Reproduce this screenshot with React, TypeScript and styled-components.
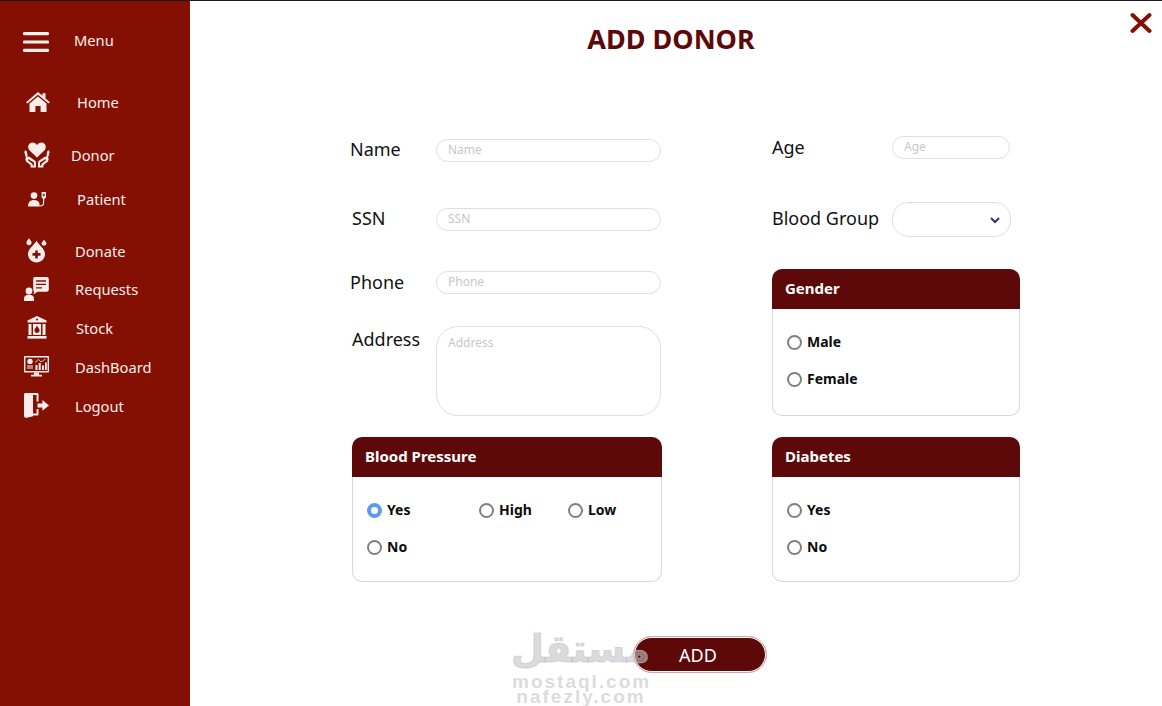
import React from "react";
import styled, { createGlobalStyle } from "styled-components";

const GlobalStyle = createGlobalStyle`
  html, body {
    margin: 0;
    padding: 0;
    height: 100%;
    background: #ffffff;
    font-family: "Noto Sans", "Open Sans", sans-serif;
    overflow: hidden;
  }
`;

const Page = styled.div`
  display: flex;
  width: 1162px;
  height: 706px;
  border-top: 1px solid #1a1a1a;
  box-sizing: border-box;
`;

const Sidebar = styled.nav`
  width: 190px;
  flex-shrink: 0;
  background: #841004;
  padding-top: 20px;
  box-sizing: border-box;
`;

const NavItem = styled.div<{
  $height: number;
  $iconLeft: number;
  $textLeft: number;
  $mt?: number;
  $iconDrop?: number;
}>`
  position: relative;
  display: flex;
  align-items: center;
  height: ${(p) => p.$height}px;
  margin-top: ${(p) => p.$mt ?? 0}px;
  padding-left: ${(p) => p.$iconLeft}px;
  color: #fbeeea;
  font-size: 14.7px;

  svg {
    margin-top: ${(p) => p.$iconDrop ?? 0}px;
  }

  span {
    position: absolute;
    left: ${(p) => p.$textLeft}px;
  }
`;

const Main = styled.main`
  flex: 1;
  display: flex;
  flex-direction: column;
  position: relative;
`;

const Title = styled.h1`
  margin: 19px 0 0;
  padding-right: 10px;
  text-align: center;
  font-size: 27px;
  line-height: 38px;
  font-weight: 700;
  color: #5e0909;
`;

const Close = styled.button`
  position: absolute;
  top: 11px;
  right: 10px;
  width: 22px;
  height: 22px;
  padding: 0;
  border: none;
  background: none;
`;

const Columns = styled.div`
  display: grid;
  grid-template-columns: 312px 248px;
  column-gap: 110px;
  padding: 0 0 0 160px;
`;

const Column = styled.div<{ $top: number }>`
  display: flex;
  flex-direction: column;
  padding-top: ${(p) => p.$top}px;
`;

const Row = styled.div<{ $mt?: number; $labelWidth: number }>`
  display: grid;
  grid-template-columns: ${(p) => p.$labelWidth}px auto;
  margin-top: ${(p) => p.$mt ?? 0}px;
  align-items: center;
  justify-content: start;
`;

const Label = styled.label<{ $shift?: number; $top?: number; $lift?: number }>`
  font-size: 18px;
  line-height: 24px;
  color: #111111;
  padding-left: ${(p) => p.$shift ?? 0}px;
  align-self: ${(p) => (p.$top ? "start" : "center")};
  margin-top: ${(p) => p.$top ?? -2 - (p.$lift ?? 0)}px;
`;

const TextInput = styled.input<{ $width: number }>`
  width: ${(p) => p.$width}px;
  height: 23px;
  box-sizing: border-box;
  padding: 0 11px 2px;
  border: 1px solid #dfdfe2;
  border-radius: 12px;
  background: #ffffff;
  font-family: inherit;
  font-size: 12px;
  outline: none;

  &::placeholder {
    color: #c6c7ca;
  }
`;

const TextBox = styled.textarea`
  display: block;
  width: 225px;
  height: 90px;
  box-sizing: border-box;
  padding: 7px 11px;
  border: 1px solid #dfdfe2;
  border-radius: 22px;
  background: #ffffff;
  font-family: inherit;
  font-size: 12px;
  resize: none;
  outline: none;

  &::placeholder {
    color: #c6c7ca;
  }
`;

const SelectBox = styled.div`
  position: relative;
  width: 119px;
  height: 35px;
  box-sizing: border-box;
  border: 1px solid #dfdfe2;
  border-radius: 16px;

  svg {
    position: absolute;
    right: 10px;
    top: 14px;
  }
`;

const Card = styled.section<{ $mt: number; $shift?: number; $height: number; $width?: number }>`
  display: flex;
  flex-direction: column;
  margin-top: ${(p) => p.$mt}px;
  margin-left: ${(p) => p.$shift ?? 0}px;
  height: ${(p) => p.$height}px;
  width: ${(p) => (p.$width ? `${p.$width}px` : "auto")};
`;

const CardHead = styled.h2`
  margin: 0;
  height: 40px;
  flex-shrink: 0;
  padding-left: 13px;
  border-radius: 10px 10px 0 0;
  background: #5e0909;
  color: #ffffff;
  font-size: 15px;
  font-weight: 700;
  line-height: 39px;
`;

const Options = styled.div<{ $cols: string }>`
  flex: 1;
  display: grid;
  grid-template-columns: ${(p) => p.$cols};
  grid-auto-rows: 37px;
  align-content: start;
  padding: 15px 0 0 14px;
  border: 1px solid #d9d9dc;
  border-top: none;
  border-radius: 0 0 10px 10px;
`;

const Option = styled.label`
  display: flex;
  align-items: center;
  gap: 5px;
  height: 37px;
  font-size: 14px;
  font-weight: 700;
  color: #0c0c0c;

  span {
    margin-bottom: 2px;
  }
`;

const RadioMark = styled.i<{ $on?: boolean }>`
  width: 15px;
  height: 15px;
  box-sizing: border-box;
  border-radius: 50%;
  background: #ffffff;
  border: ${(p) => (p.$on ? "4px solid #5a9af0" : "2px solid #808080")};
`;

const Footer = styled.div`
  display: flex;
  justify-content: flex-start;
  padding: 54px 0 0 443px;
`;

const AddButton = styled.button`
  width: 134px;
  height: 37px;
  box-sizing: border-box;
  padding: 0 4px 0 0;
  border: 1px solid #cfa6a8;
  border-radius: 19px;
  background: #5e0909;
  background-clip: padding-box;
  box-shadow: inset 0 0 0 1px #ffffff;
  color: #ffffff;
  font-family: inherit;
  font-size: 18px;
`;

const Watermark = styled.div`
  position: absolute;
  left: 322px;
  top: 623px;
  width: 138px;
  color: rgba(196, 196, 198, 0.6);
  text-align: center;
  pointer-events: none;
  font-family: "DejaVu Sans", sans-serif;
  font-weight: 700;
`;

const MarkLogo = styled.div`
  font-size: 38px;
  line-height: 50px;
  -webkit-text-stroke: 1px rgba(196, 196, 198, 0.6);
`;

const MarkLine = styled.div`
  font-family: "Liberation Sans", sans-serif;
  font-weight: 700;
  font-size: 19px;
  line-height: 15px;
  letter-spacing: 2px;
  white-space: nowrap;
`;

const W = "#fbeeea";
const BG = "#841004";

const MenuIcon = () => (
  <svg width="26" height="20" viewBox="0 0 26 20">
    <g fill={W}>
      <rect y="0" width="26" height="3.2" rx="1.2" />
      <rect y="8.4" width="26" height="3.2" rx="1.2" />
      <rect y="16.8" width="26" height="3.2" rx="1.2" />
    </g>
  </svg>
);

const HomeIcon = () => (
  <svg width="24" height="20" viewBox="0 0 24 20">
    <path fill={W} d="M12 0 L16.5 3.8 V1.2 H19.5 V6.4 L24 10.2 L22.6 11.6 L12 2.8 L1.4 11.6 L0 10.2 Z" />
    <path fill={W} d="M12 4.6 L20.5 11.6 V20 H14.6 V14 H9.4 V20 H3.5 V11.6 Z" />
  </svg>
);

const DonorIcon = () => (
  <svg width="26" height="26" viewBox="0 0 26 26">
    <path fill={W} d="M13 15.5 L5.6 8.4 C2.8 5.4 4.6 0.5 8.6 0.5 C10.6 0.5 12.2 1.6 13 3.2 C13.8 1.6 15.4 0.5 17.4 0.5 C21.4 0.5 23.2 5.4 20.4 8.4 Z" />
    <path fill={W} d="M0.8 8.5 C1.8 8.2 2.8 8.8 3 10 L3.6 15 L8.6 19.4 L7.6 20.2 L2 16 L0.4 10.4 Z" />
    <path fill={W} d="M25.2 8.5 C24.2 8.2 23.2 8.8 23 10 L22.4 15 L17.4 19.4 L18.4 20.2 L24 16 L25.6 10.4 Z" />
    <path fill={W} d="M1.2 16.5 L5 14.6 L10.8 18.6 C11.6 19.2 12 20 12 21 V25.5 H6.6 V23 L2 19.5 Z" />
    <path fill={W} d="M24.8 16.5 L21 14.6 L15.2 18.6 C14.4 19.2 14 20 14 21 V25.5 H19.4 V23 L24 19.5 Z" />
    <path fill={BG} d="M4.2 17 L10 20.6 V23.5 H8.6 V22 L4.2 18.6 Z M21.8 17 L16 20.6 V23.5 H17.4 V22 L21.8 18.6 Z" />
  </svg>
);

const PatientIcon = () => (
  <svg width="19" height="15" viewBox="0 0 19 15">
    <circle cx="6" cy="3.6" r="3.3" fill={W} />
    <path fill={W} d="M0 14.5 C0 10 2.4 8 6 8 C8.6 8 10.4 9 11.4 11 L11.4 14.5 Z" />
    <path fill="none" stroke={W} strokeWidth="1.1" d="M10.8 13.6 C13.4 14.6 15.6 13.6 15.6 10.4 V7" />
    <path fill={W} d="M13.6 0 H18 V5.4 L15.8 7.6 L13.6 5.4 Z" />
    <path stroke={BG} strokeWidth="0.9" d="M15.8 1.6 V4.4 M14.4 3 H17.2" />
  </svg>
);

const DonateIcon = () => (
  <svg width="21" height="25" viewBox="0 0 21 25">
    <path fill={W} d="M10.5 2.5 C12 6.5 19 10.5 19 16 C19 20.8 15.2 24.5 10.5 24.5 C5.8 24.5 2 20.8 2 16 C2 10.5 9 6.5 10.5 2.5 Z" />
    <path fill={W} d="M3 0 C3.5 1.6 5.6 3 5.6 4.8 C5.6 6.2 4.4 7.2 3 7.2 C1.6 7.2 0.4 6.2 0.4 4.8 C0.4 3 2.5 1.6 3 0 Z" />
    <path fill={W} d="M18 1.5 C18.5 2.8 20.4 4 20.4 5.6 C20.4 6.9 19.3 7.8 18 7.8 C16.7 7.8 15.6 6.9 15.6 5.6 C15.6 4 17.5 2.8 18 1.5 Z" />
    <path stroke={BG} strokeWidth="2.6" d="M10.5 12.4 V20.4 M6.5 16.4 H14.5" />
  </svg>
);

const RequestsIcon = () => (
  <svg width="25" height="24" viewBox="0 0 25 24">
    <circle cx="5" cy="14" r="3.4" fill={W} />
    <path fill={W} d="M0 24 V21.5 C0 19 2 17.8 5 17.8 C8 17.8 10 19 10 21.5 V24 Z" />
    <path fill={W} d="M11 0 H22.5 C24 0 24.8 0.8 24.8 2.2 V12.6 C24.8 14 24 14.8 22.5 14.8 H13.5 L9.5 17.4 L10.2 14.6 C9.6 14.2 9.2 13.6 9.2 12.6 V2.2 C9.2 0.8 9.8 0 11 0 Z" />
    <path stroke={BG} strokeWidth="1.3" d="M12 4 H22 M12 7.4 H22 M12 10.8 H18" />
  </svg>
);

const StockIcon = () => (
  <svg width="20" height="23" viewBox="0 0 20 23">
    <path fill={W} d="M10 0 L19.5 4.6 V6.6 H0.5 V4.6 Z" />
    <circle cx="10" cy="3.6" r="1" fill={BG} />
    <rect x="1.5" y="8" width="3" height="11" fill={W} />
    <rect x="15.5" y="8" width="3" height="11" fill={W} />
    <rect x="6" y="8" width="8" height="11" fill={W} />
    <path fill={BG} d="M10 9.6 C10.6 11.4 12.6 12.6 12.6 14.6 C12.6 16 11.4 17 10 17 C8.6 17 7.4 16 7.4 14.6 C7.4 12.6 9.4 11.4 10 9.6 Z" />
    <rect x="0.5" y="20" width="19" height="2.6" fill={W} />
  </svg>
);

const DashIcon = () => (
  <svg width="25" height="21" viewBox="0 0 25 21">
    <path fill={W} fillRule="evenodd" d="M1 0 H24 C24.6 0 25 0.4 25 1 V15.4 C25 16 24.6 16.4 24 16.4 H1 C0.4 16.4 0 16 0 15.4 V1 C0 0.4 0.4 0 1 0 Z M1.4 1.4 V15 H23.6 V1.4 Z" />
    <path fill={W} d="M10 16.4 H15 V18.8 H18 V20.4 H7 V18.8 H10 Z" />
    <circle cx="6" cy="5.4" r="2.7" fill={W} />
    <path stroke={W} strokeWidth="1" d="M3 10 H9 M3 12 H9" />
    <path fill={W} d="M11.5 9 H13.5 V14 H11.5 Z M14.7 7 H16.7 V14 H14.7 Z M17.9 9.5 H19.9 V14 H17.9 Z M21 6.5 H22.8 V14 H21 Z" />
    <path fill="none" stroke={W} strokeWidth="0.8" d="M11 6.5 L14.5 3.4 L17 6 L21.5 3" />
  </svg>
);

const LogoutIcon = () => (
  <svg width="25" height="25" viewBox="0 0 25 25">
    <path fill={W} d="M1.5 0 H9 V23.2 L3 24.8 C1.2 25 0 24.3 0 22.8 V1.5 C0 0.6 0.6 0 1.5 0 Z" />
    <path fill={W} d="M9 0 H13 C14 0 14.5 0.6 14.5 1.5 V8.6 H12.6 V2 H9 Z" />
    <path fill={W} d="M12.6 16 H14.5 V21 C14.5 22 14 22.6 13 22.6 H9 V20.6 H12.6 Z" />
    <path fill={W} d="M13.5 10.4 H18.4 V7 L25 12.4 L18.4 17.8 V14.4 H13.5 Z" />
  </svg>
);

const Chevron = () => (
  <svg width="10" height="7" viewBox="0 0 10 7">
    <path fill="none" stroke="#4a2a66" strokeWidth="2" d="M1 1 L5 5 L9 1" />
  </svg>
);

const CloseIcon = () => (
  <svg width="22" height="22" viewBox="0 0 22 22">
    <path stroke="#841004" strokeWidth="4" strokeLinecap="round" d="M2.5 3 L19.5 19 M19.5 3 L2.5 19" />
  </svg>
);

const Radio: React.FC<{ text: string; on?: boolean }> = ({ text, on }) => (
  <Option>
    <RadioMark $on={on} />
    <span>{text}</span>
  </Option>
);

const App: React.FC = () => {
  return (
    <Page>
      <GlobalStyle />
      <Sidebar>
        <NavItem $height={38} $iconLeft={23} $textLeft={74} $iconDrop={4}>
          <MenuIcon />
          <span>Menu</span>
        </NavItem>
        <NavItem $height={44} $iconLeft={26} $textLeft={77} $mt={21}>
          <HomeIcon />
          <span>Home</span>
        </NavItem>
        <NavItem $height={44} $iconLeft={24} $textLeft={71} $mt={9}>
          <DonorIcon />
          <span>Donor</span>
        </NavItem>
        <NavItem $height={44} $iconLeft={28} $textLeft={77}>
          <PatientIcon />
          <span>Patient</span>
        </NavItem>
        <NavItem $height={37} $iconLeft={26} $textLeft={75} $mt={11}>
          <DonateIcon />
          <span>Donate</span>
        </NavItem>
        <NavItem $height={39} $iconLeft={24} $textLeft={75}>
          <RequestsIcon />
          <span>Requests</span>
        </NavItem>
        <NavItem $height={39} $iconLeft={27} $textLeft={76}>
          <StockIcon />
          <span>Stock</span>
        </NavItem>
        <NavItem $height={39} $iconLeft={24} $textLeft={75}>
          <DashIcon />
          <span>DashBoard</span>
        </NavItem>
        <NavItem $height={39} $iconLeft={24} $textLeft={75}>
          <LogoutIcon />
          <span>Logout</span>
        </NavItem>
      </Sidebar>
      <Main>
        <Title>ADD DONOR</Title>
        <Close aria-label="close">
          <CloseIcon />
        </Close>
        <Columns>
          <Column $top={81}>
            <Row $labelWidth={86}>
              <Label $lift={2}>Name</Label>
              <TextInput $width={225} placeholder="Name" />
            </Row>
            <Row $labelWidth={86} $mt={46}>
              <Label $shift={2} $lift={2}>SSN</Label>
              <TextInput $width={225} placeholder="SSN" />
            </Row>
            <Row $labelWidth={86} $mt={40}>
              <Label>Phone</Label>
              <TextInput $width={225} placeholder="Phone" />
            </Row>
            <Row $labelWidth={86} $mt={32}>
              <Label $shift={2} $top={1}>Address</Label>
              <TextBox placeholder="Address" />
            </Row>
            <Card $mt={21} $shift={2} $height={145} $width={310}>
              <CardHead>Blood Pressure</CardHead>
              <Options $cols="112px 89px 1fr">
                <Radio text="Yes" on />
                <Radio text="High" />
                <Radio text="Low" />
                <Radio text="No" />
              </Options>
            </Card>
          </Column>
          <Column $top={78}>
            <Row $labelWidth={120}>
              <Label>Age</Label>
              <TextInput $width={118} placeholder="Age" />
            </Row>
            <Row $labelWidth={120} $mt={43}>
              <Label $lift={2}>Blood Group</Label>
              <SelectBox>
                <Chevron />
              </SelectBox>
            </Row>
            <Card $mt={32} $height={147}>
              <CardHead>Gender</CardHead>
              <Options $cols="1fr">
                <Radio text="Male" />
                <Radio text="Female" />
              </Options>
            </Card>
            <Card $mt={21} $height={145}>
              <CardHead>Diabetes</CardHead>
              <Options $cols="1fr">
                <Radio text="Yes" />
                <Radio text="No" />
              </Options>
            </Card>
          </Column>
        </Columns>
        <Footer>
          <AddButton>ADD</AddButton>
        </Footer>
        <Watermark>
          <MarkLogo dir="rtl" lang="ar">مستقل</MarkLogo>
          <MarkLine>mostaql.com</MarkLine>
          <MarkLine>nafezly.com</MarkLine>
        </Watermark>
      </Main>
    </Page>
  );
};

export default App;
